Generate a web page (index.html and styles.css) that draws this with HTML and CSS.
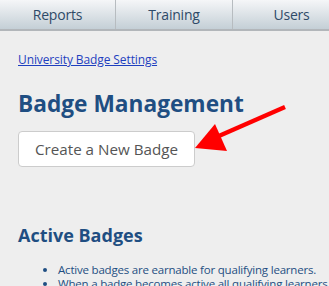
FILE: index.html
```html
<!DOCTYPE html>
<html>
<head>
<meta charset="utf-8">
<link rel="stylesheet" href="styles.css">
</head>
<body>
<nav class="tabs">
  <div class="tab">Reports</div>
  <div class="tab">Training</div>
  <div class="tab">Users</div>
</nav>
<main class="content">
  <a class="crumb" href="#">University Badge Settings</a>
  <h1 class="title">Badge Management</h1>
  <button class="btn">Create a New Badge</button>
  <h2 class="section">Active Badges</h2>
  <ul class="notes">
    <li>Active badges are earnable for qualifying learners.</li>
    <li>When a badge becomes active all qualifying learners will earn it.</li>
  </ul>
</main>
<svg class="arrow" width="329" height="286" viewBox="0 0 329 286">
  <line x1="285" y1="107" x2="212" y2="139" stroke="#ff0000" stroke-width="4.5" stroke-linecap="butt"/>
  <polygon points="195,148 215,124 227,151" fill="#ff0000"/>
</svg>
</body>
</html>
```
FILE: styles.css
```css
html, body {
  margin: 0;
  padding: 0;
}
body {
  background: #eeeeee;
  font-family: "Open Sans", "Noto Sans", sans-serif;
  width: 329px;
  height: 286px;
  overflow: hidden;
  position: relative;
}
.tabs {
  display: flex;
  height: 29px;
  border-bottom: 2px solid #b2b6ba;
  background: linear-gradient(#f5f6f8, #c4cfd6);
  overflow: hidden;
}
.tab {
  flex: 0 0 117px;
  border-right: 1px solid #b7bcc0;
  box-sizing: border-box;
  text-align: center;
  font-size: 14px;
  line-height: 29px;
  color: #2e4a68;
  letter-spacing: -0.2px;
}
.tab:first-child { flex-basis: 116px; }
.tab:last-child { border-right: 0; }
.content {
  padding: 0 18px;
}
.crumb {
  display: inline-block;
  margin-top: 22px;
  font-size: 12px;
  line-height: 14px;
  color: #1e3fbf;
  letter-spacing: -0.1px;
}
.title {
  margin: 22px 0 0;
  font-size: 22.7px;
  line-height: 26px;
  font-weight: 700;
  color: #1f4e82;
}
.btn {
  display: block;
  margin-top: 14px;
  width: 177px;
  height: 36px;
  background: #ffffff;
  border: 1px solid #cccccc;
  border-radius: 4px;
  font-family: inherit;
  font-size: 15.2px;
  color: #555555;
  padding: 0;
}
.section {
  margin: 56px 0 0;
  font-size: 18px;
  line-height: 24px;
  font-weight: 700;
  color: #1f4e82;
}
.notes {
  margin: 16px 0 0;
  padding-left: 40px;
  font-size: 11.5px;
  line-height: 14px;
  color: #1f4e82;
  white-space: nowrap;
  letter-spacing: -0.2px;
}
.arrow {
  position: absolute;
  left: 0;
  top: 0;
  pointer-events: none;
}
```
